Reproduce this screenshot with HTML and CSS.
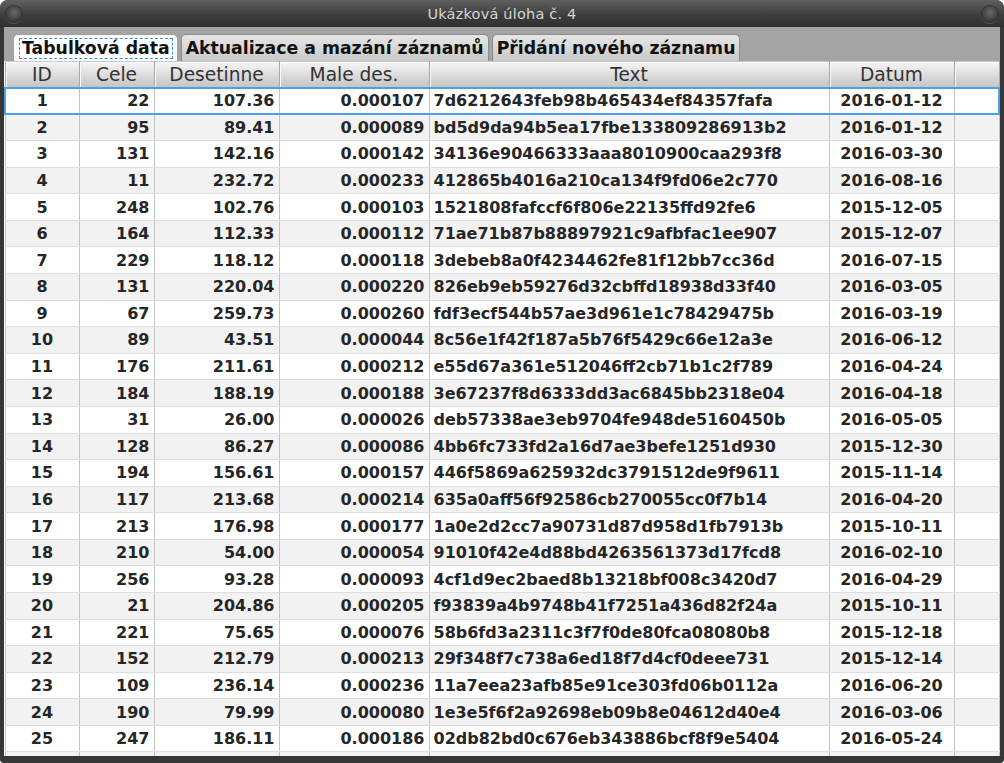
FILE: index.html
```html
<!DOCTYPE html>
<html lang="cs">
<head>
<meta charset="UTF-8">
<title>Ukázková úloha č. 4</title>
<link rel="stylesheet" href="styles.css">
</head>
<body>
<div class="window">
    <div class="titlebar">
        <span class="knob"></span>
        <span class="title">Ukázková úloha č. 4</span>
        <span class="knob"></span>
    </div>
    <div class="frame">
        <div class="tabs">
            <div class="tab active"><span class="focus">Tabulková data</span></div>
            <div class="tab">Aktualizace a mazání záznamů</div>
            <div class="tab">Přidání nového záznamu</div>
        </div>
        <div class="table-wrap">
            <table class="grid">
                <colgroup>
                    <col style="width: 74px">
                    <col style="width: 75px">
                    <col style="width: 125px">
                    <col style="width: 150px">
                    <col style="width: 400px">
                    <col style="width: 125px">
                    <col>
                </colgroup>
                <thead>
                    <tr>
                        <th>ID</th>
                        <th>Cele</th>
                        <th>Desetinne</th>
                        <th>Male des.</th>
                        <th>Text</th>
                        <th>Datum</th>
                        <th></th>
                    </tr>
                </thead>
                <tbody id="rows"></tbody>
            </table>
        </div>
    </div>
</div>

<script>
// data z tabulky
var data = [
    [1, 22, "107.36", "0.000107", "7d6212643feb98b465434ef84357fafa", "2016-01-12"],
    [2, 95, "89.41", "0.000089", "bd5d9da94b5ea17fbe133809286913b2", "2016-01-12"],
    [3, 131, "142.16", "0.000142", "34136e90466333aaa8010900caa293f8", "2016-03-30"],
    [4, 11, "232.72", "0.000233", "412865b4016a210ca134f9fd06e2c770", "2016-08-16"],
    [5, 248, "102.76", "0.000103", "1521808fafccf6f806e22135ffd92fe6", "2015-12-05"],
    [6, 164, "112.33", "0.000112", "71ae71b87b88897921c9afbfac1ee907", "2015-12-07"],
    [7, 229, "118.12", "0.000118", "3debeb8a0f4234462fe81f12bb7cc36d", "2016-07-15"],
    [8, 131, "220.04", "0.000220", "826eb9eb59276d32cbffd18938d33f40", "2016-03-05"],
    [9, 67, "259.73", "0.000260", "fdf3ecf544b57ae3d961e1c78429475b", "2016-03-19"],
    [10, 89, "43.51", "0.000044", "8c56e1f42f187a5b76f5429c66e12a3e", "2016-06-12"],
    [11, 176, "211.61", "0.000212", "e55d67a361e512046ff2cb71b1c2f789", "2016-04-24"],
    [12, 184, "188.19", "0.000188", "3e67237f8d6333dd3ac6845bb2318e04", "2016-04-18"],
    [13, 31, "26.00", "0.000026", "deb57338ae3eb9704fe948de5160450b", "2016-05-05"],
    [14, 128, "86.27", "0.000086", "4bb6fc733fd2a16d7ae3befe1251d930", "2015-12-30"],
    [15, 194, "156.61", "0.000157", "446f5869a625932dc3791512de9f9611", "2015-11-14"],
    [16, 117, "213.68", "0.000214", "635a0aff56f92586cb270055cc0f7b14", "2016-04-20"],
    [17, 213, "176.98", "0.000177", "1a0e2d2cc7a90731d87d958d1fb7913b", "2015-10-11"],
    [18, 210, "54.00", "0.000054", "91010f42e4d88bd4263561373d17fcd8", "2016-02-10"],
    [19, 256, "93.28", "0.000093", "4cf1d9ec2baed8b13218bf008c3420d7", "2016-04-29"],
    [20, 21, "204.86", "0.000205", "f93839a4b9748b41f7251a436d82f24a", "2015-10-11"],
    [21, 221, "75.65", "0.000076", "58b6fd3a2311c3f7f0de80fca08080b8", "2015-12-18"],
    [22, 152, "212.79", "0.000213", "29f348f7c738a6ed18f7d4cf0deee731", "2015-12-14"],
    [23, 109, "236.14", "0.000236", "11a7eea23afb85e91ce303fd06b0112a", "2016-06-20"],
    [24, 190, "79.99", "0.000080", "1e3e5f6f2a92698eb09b8e04612d40e4", "2016-03-06"],
    [25, 247, "186.11", "0.000186", "02db82bd0c676eb343886bcf8f9e5404", "2016-05-24"],
    ["", "", "", "", "", ""]
];

var align = ["center", "right", "right", "right", "left", "center", ""];
var body = document.getElementById("rows");

data.forEach(function(row, i) {
    var tr = document.createElement("tr");
    if (i === 0) tr.classList.add("selected");
    row.concat([""]).forEach(function(value, c) {
        var td = document.createElement("td");
        td.textContent = value;
        if (align[c]) td.classList.add(align[c]);
        tr.appendChild(td);
    });
    body.appendChild(tr);
});
</script>
</body>
</html>
```

FILE: styles.css
```css
html, body {
    margin: 0;
    padding: 0;
    background-color: #ffffff;
}

body {
    font-family: "DejaVu Sans", sans-serif;
}

.window {
    width: 1004px;
    height: 763px;
    display: flex;
    flex-direction: column;
    background-color: #363636;
    border-radius: 8px 8px 4px 4px;
    overflow: hidden;
}

.titlebar {
    height: 27px;
    flex: none;
    display: flex;
    align-items: center;
    justify-content: space-between;
    padding: 0 6px;
    background: linear-gradient(#606060, #3c3c3c 60%, #303030);
}

.title {
    color: #d6d6d6;
    font-size: 14.5px;
    letter-spacing: 0.2px;
}

.knob {
    width: 16px;
    height: 16px;
    border-radius: 50%;
    background: radial-gradient(circle at 50% 40%, #6a6a6a, #3a3a3a 70%);
    box-shadow: 0 0 0 1px #2a2a2a, 0 1px 0 1px #555;
}

.frame {
    flex: 1;
    margin: 0 4px 7px 4px;
    display: flex;
    flex-direction: column;
    background-color: #a4a4a4;
    min-height: 0;
}

.tabs {
    height: 34px;
    flex: none;
    box-sizing: border-box;
    display: flex;
    align-items: flex-end;
    gap: 3px;
    padding: 6px 0 0 9px;
}

.tab {
    height: 27px;
    box-sizing: border-box;
    padding: 0 4px;
    display: flex;
    align-items: center;
    font-size: 17.3px;
    font-weight: bold;
    color: #111;
    background: linear-gradient(#e6e6e6, #c9c9c9);
    border: 1px solid #8c8c8c;
    border-bottom: none;
    border-radius: 5px 5px 0 0;
    white-space: nowrap;
}

.tab.active {
    background: #ffffff;
    border-color: #a0a0a0;
    padding: 0 4px 0 5px;
}

.focus {
    border: 1px dashed #3a8ee6;
    padding: 0 2px;
    line-height: 19px;
}

.table-wrap {
    flex: 1;
    min-height: 0;
    overflow: hidden;
    background-color: #ffffff;
}

.grid {
    width: 996px;
    table-layout: fixed;
    border-collapse: collapse;
}

.grid th {
    height: 26px;
    box-sizing: border-box;
    padding: 2px 0 0 0;
    font-size: 18.6px;
    font-weight: normal;
    color: #333;
    background: linear-gradient(#f4f4f4, #dadada 55%, #c4c4c4);
    border: 1px solid #a8a8a8;
    border-top-color: #c8c8c8;
    box-shadow: inset 1px 1px 0 #fafafa;
    white-space: nowrap;
    line-height: 22px;
}

.grid td {
    height: 26.58px;
    box-sizing: border-box;
    padding: 0 4px;
    font-size: 16px;
    font-weight: bold;
    color: #262626;
    border-left: 1px solid #c4c4c4;
    border-right: 1px solid #c4c4c4;
    border-bottom: 1px solid #dedede;
    white-space: nowrap;
    overflow: hidden;
}

.grid tbody tr:nth-child(even) td {
    background-color: #f2f2f2;
}

.grid tr.selected td {
    border-top: 2px solid #4d9fe6;
    border-bottom: 2px solid #4d9fe6;
}

.grid tr.selected td:first-child {
    border-left: 2px solid #4d9fe6;
}

.grid tr.selected td:last-child {
    border-right: 2px solid #4d9fe6;
}

.center {
    text-align: center;
}

.right {
    text-align: right;
}

.left {
    text-align: left;
}
```
